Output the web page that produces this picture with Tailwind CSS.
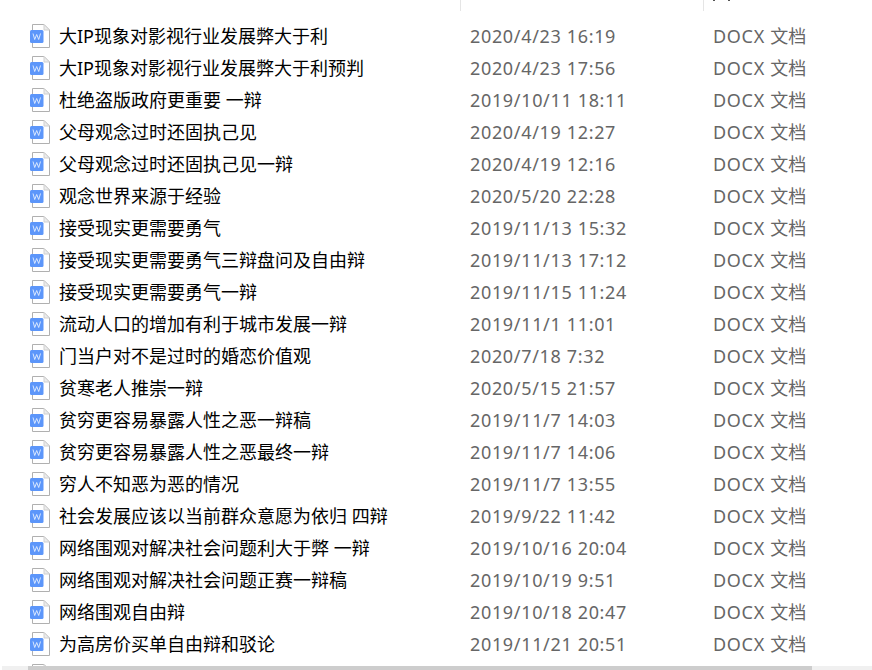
<!DOCTYPE html>
<html lang="zh-CN">
<head>
    <meta charset="UTF-8">
    <title>文件列表</title>
    <script src="https://cdn.jsdelivr.net/npm/@tailwindcss/browser@4"></script>
</head>
<body class="bg-white h-[670px] overflow-hidden relative font-['Noto_Sans','Noto_Sans_CJK_SC',sans-serif]">

    <div class="flex h-[11px]">
        <div class="w-[461px] border-r border-[#e5e5e5]"></div>
        <div class="w-[243px] border-r border-[#e5e5e5]"></div>
        <!-- bottom edge of the clipped column title -->
        <div class="flex gap-[13px] pl-[9px] h-[1px]">
            <div class="w-[2px] bg-[#555]"></div>
            <div class="w-[2px] bg-[#555]"></div>
        </div>
    </div>

    <div id="rows" class="pt-[9px]"></div>

    <div class="absolute left-[2px] right-0 bottom-0 h-[4px] bg-[#f0f0f0]">
        <div class="ml-[26px] w-[784px] h-full bg-[#cdcdcd]"></div>
    </div>

    <script>
        const files = [
            ['大IP现象对影视行业发展弊大于利', '2020/4/23 16:19'],
            ['大IP现象对影视行业发展弊大于利预判', '2020/4/23 17:56'],
            ['杜绝盗版政府更重要 一辩', '2019/10/11 18:11'],
            ['父母观念过时还固执己见', '2020/4/19 12:27'],
            ['父母观念过时还固执己见一辩', '2020/4/19 12:16'],
            ['观念世界来源于经验', '2020/5/20 22:28'],
            ['接受现实更需要勇气', '2019/11/13 15:32'],
            ['接受现实更需要勇气三辩盘问及自由辩', '2019/11/13 17:12'],
            ['接受现实更需要勇气一辩', '2019/11/15 11:24'],
            ['流动人口的增加有利于城市发展一辩', '2019/11/1 11:01'],
            ['门当户对不是过时的婚恋价值观', '2020/7/18 7:32'],
            ['贫寒老人推崇一辩', '2020/5/15 21:57'],
            ['贫穷更容易暴露人性之恶一辩稿', '2019/11/7 14:03'],
            ['贫穷更容易暴露人性之恶最终一辩', '2019/11/7 14:06'],
            ['穷人不知恶为恶的情况', '2019/11/7 13:55'],
            ['社会发展应该以当前群众意愿为依归 四辩', '2019/9/22 11:42'],
            ['网络围观对解决社会问题利大于弊 一辩', '2019/10/16 20:04'],
            ['网络围观对解决社会问题正赛一辩稿', '2019/10/19 9:51'],
            ['网络围观自由辩', '2019/10/18 20:47'],
            ['为高房价买单自由辩和驳论', '2019/11/21 20:51']
        ];

        const icon = `<svg class="w-[20px] h-[24px] shrink-0" viewBox="0 0 20 24" fill="none">
            <path d="M2.5 .5H14L19.5 6V23.5H2.5Z" fill="#fff" stroke="#b0b0b0"/>
            <path d="M14 .5V6H19.5Z" fill="#ececec" stroke="#d0d0d0"/>
            <rect x="0" y="6" width="13.5" height="13" rx="1.5" fill="#5c96fa"/>
            <path d="M3 9.5L4.7 15.5L6.7 10.5L8.7 15.5L10.5 9.5" stroke="#e4eeff" stroke-width=".9"/>
        </svg>`;

        document.getElementById('rows').innerHTML = files.map(f => `
            <div class="flex items-center h-[32px] text-[18px] leading-[32px]">
                <div class="w-[59px] pl-[30px] flex">${icon}</div>
                <div class="w-[411px] text-black whitespace-nowrap">${f[0]}</div>
                <div class="w-[243px] text-[#666] whitespace-nowrap tracking-[0.66px]">${f[1]}</div>
                <div class="text-[#666] whitespace-nowrap"><span class="tracking-[0.7px]">DOCX </span>文档</div>
            </div>`).join('') + `<div class="pl-[30px] pt-[4px]">${icon}</div>`;
    </script>

</body>
</html>
